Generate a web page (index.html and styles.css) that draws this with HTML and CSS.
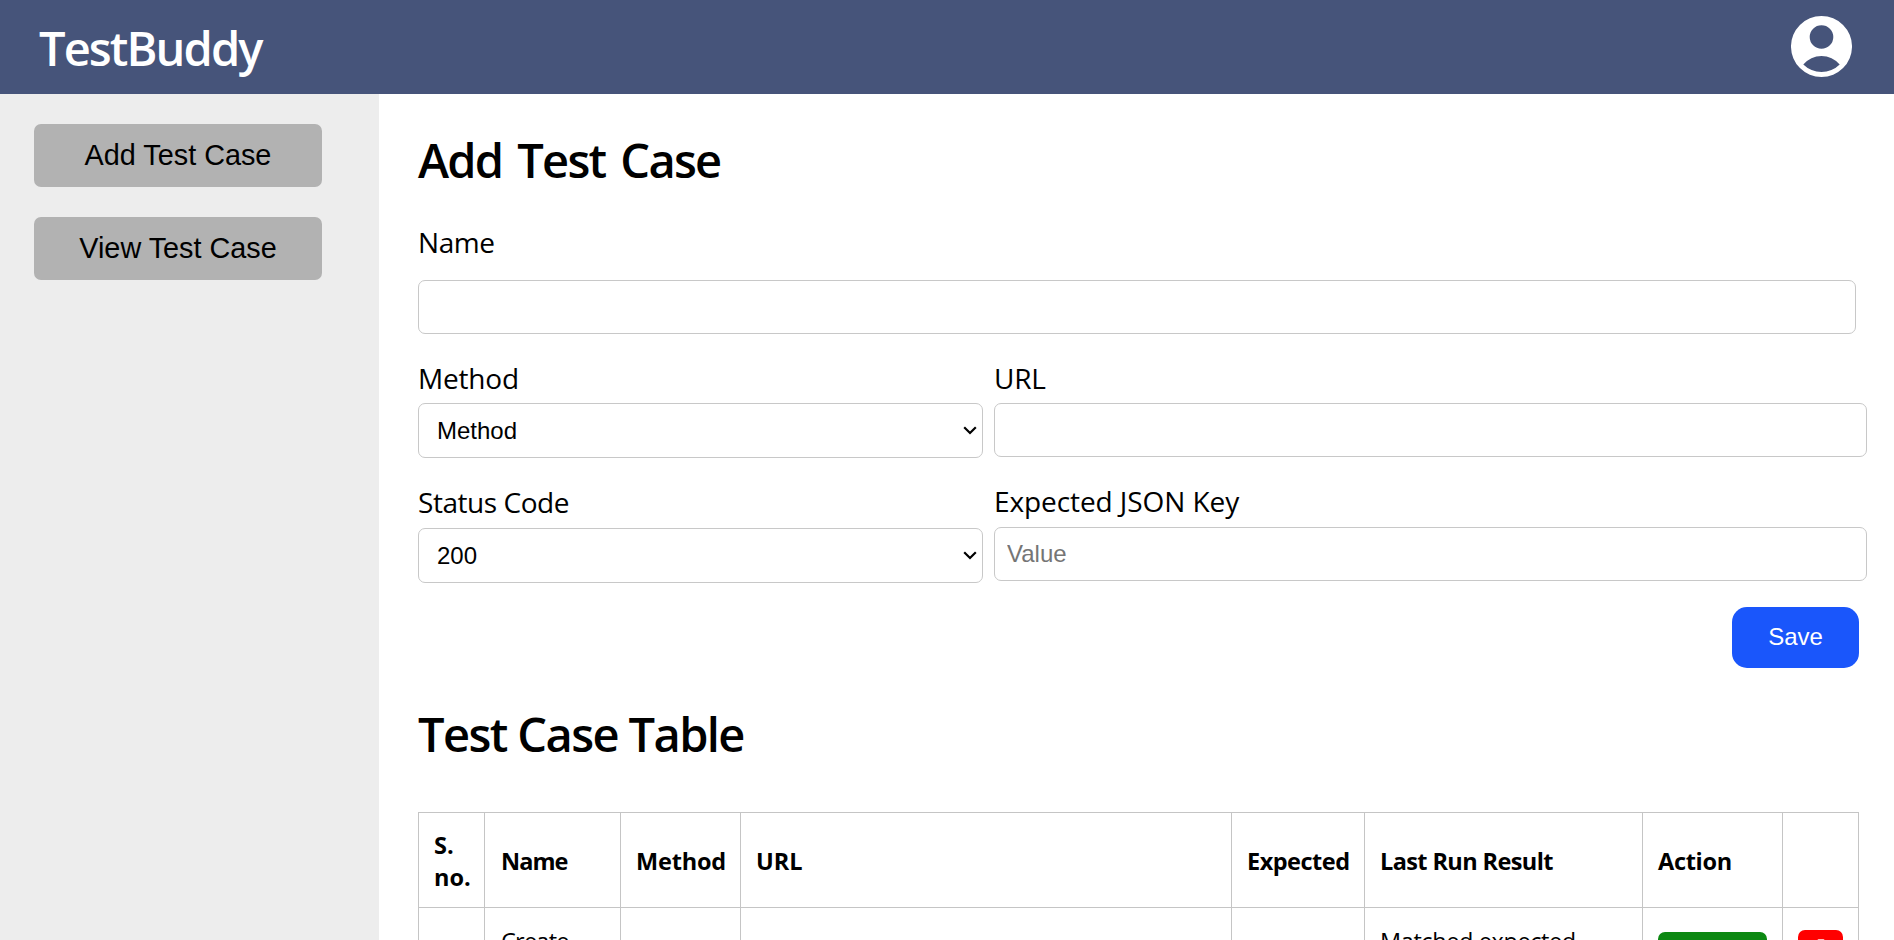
FILE: index.html
```html
<!DOCTYPE html>
<html lang="en">
<head>
<meta charset="utf-8">
<title>TestBuddy</title>
<link rel="stylesheet" href="styles.css">
</head>
<body>
<header class="topbar">
  <div class="brand">TestBuddy</div>
  <svg class="avatar" viewBox="0 0 61 61" aria-label="Account">
    <path fill="#fff" fill-rule="evenodd" d="M30.5 0a30.5 30.5 0 1 1 0 61a30.5 30.5 0 1 1 0-61zM30.5 9.2a11.8 11.8 0 1 0 0 23.6a11.8 11.8 0 1 0 0-23.6zM12.3 48.5A25.8 25.8 0 0 0 48.7 48.5A23.7 23.7 0 0 0 12.3 48.5z"/>
  </svg>
</header>
<div class="layout">
  <nav class="sidebar">
    <button class="nav-btn">Add Test Case</button>
    <button class="nav-btn">View Test Case</button>
  </nav>
  <main class="content">
    <h1 class="title title-add">Add Test Case</h1>
    <form class="form">
      <div class="field field-name">
        <label class="label label-tight">Name</label>
        <input class="input" type="text">
      </div>
      <div class="columns">
        <div class="field">
          <label class="label label-method">Method</label>
          <div class="select-wrap">
            <select class="input select"><option>Method</option></select>
            <svg class="chevron" viewBox="0 0 14 9"><path d="M1.2 1.2L7 7L12.8 1.2"/></svg>
          </div>
          <label class="label label-tight label-next">Status Code</label>
          <div class="select-wrap select-wrap-status">
            <select class="input select"><option>200</option></select>
            <svg class="chevron" viewBox="0 0 14 9"><path d="M1.2 1.2L7 7L12.8 1.2"/></svg>
          </div>
        </div>
        <div class="field">
          <label class="label label-url">URL</label>
          <input class="input input-url" type="text">
          <label class="label label-json label-next">Expected JSON Key</label>
          <input class="input input-json" type="text" placeholder="Value">
        </div>
      </div>
      <div class="actions"><button class="save" type="button">Save</button></div>
    </form>
    <h1 class="title title-table">Test Case Table</h1>
    <table class="cases">
      <colgroup><col class="c-no"><col class="c-name"><col class="c-method"><col class="c-url"><col class="c-expected"><col class="c-result"><col class="c-action"><col class="c-delete"></colgroup>
      <thead>
        <tr><th>S.<br>no.</th><th class="t-name">Name</th><th class="t-method">Method</th><th>URL</th><th class="t-expected">Expected</th><th class="t-result">Last Run Result</th><th class="t-action">Action</th><th></th></tr>
      </thead>
      <tbody>
        <tr><td></td><td class="t-create">Create</td><td></td><td></td><td></td><td class="t-matched">Matched expected</td>
          <td class="cell-run"><button class="run" aria-label="Run"></button></td>
          <td class="cell-delete"><button class="delete" aria-label="Delete"><svg class="trash" viewBox="0 0 448 512"><path fill="#fff" d="M135 18L128 32H32a32 32 0 0 0 0 64h384a32 32 0 0 0 0-64h-96l-7-14A32 32 0 0 0 284 0H164a32 32 0 0 0-29 18zM416 128H32l21 339a48 48 0 0 0 48 45h246a48 48 0 0 0 48-45z"/></svg></button></td></tr>
      </tbody>
    </table>
  </main>
</div>
</body>
</html>
```
FILE: styles.css
```css
* { box-sizing: border-box; }
body {
  margin: 0;
  height: 940px;
  overflow: hidden;
  display: flex;
  flex-direction: column;
  background: #fff;
  color: #000;
  font-family: "Open Sans", "Noto Sans", sans-serif;
}
.topbar {
  flex: none;
  height: 94px;
  padding: 0 42px 0 39px;
  display: flex;
  align-items: center;
  justify-content: space-between;
  background: #46547a;
}
.brand {
  color: #fff;
  font-size: 47px;
  font-weight: 600;
  line-height: 64px;
  letter-spacing: -1.9px;
  padding-top: 2px;
}
.avatar { width: 61px; height: 61px; margin-bottom: 1px; }
.layout { flex: 1; min-height: 0; display: flex; }
.sidebar {
  flex: none;
  width: 379px;
  padding: 30px 57px 0 34px;
  display: flex;
  flex-direction: column;
  gap: 30px;
  background: #ededed;
}
.nav-btn {
  height: 63px;
  border: 0;
  border-radius: 7px;
  background: #b2b2b2;
  color: #000;
  font: 28.8px "Liberation Sans", Arial, sans-serif;
}
.content { flex: 1; min-width: 0; padding: 34px 27px 0 39px; overflow: hidden; }
.title {
  margin: 0;
  font-size: 47px;
  font-weight: 600;
  line-height: 64px;
}
.title-add { letter-spacing: -1.75px; word-spacing: 4.5px; }
.title-table { letter-spacing: -1.6px; margin-top: 34px; }
.form { margin-top: 31px; }
.field { display: flex; flex-direction: column; }
.field-name { width: 1438px; gap: 19px; }
.columns {
  display: grid;
  grid-template-columns: 565px 873px;
  column-gap: 11px;
  align-items: start;
  margin-top: 25px;
}
.label { font-size: 28px; line-height: 38px; }
.label-tight { letter-spacing: -0.45px; }
.label-method, .label-url { letter-spacing: -0.2px; }
.label-json { letter-spacing: -0.08px; }
.label-next { margin-top: 25px; }
.input {
  display: block;
  width: 100%;
  height: 54px;
  padding: 0 12px;
  border: 1px solid #c8c8c8;
  border-radius: 7px;
  background: #fff;
  color: #000;
  font: 24px "Liberation Sans", Arial, sans-serif;
}
.input::placeholder { color: #757575; }
.input-url { margin-top: 6px; }
.input-json { margin-top: 7px; }
.select-wrap { position: relative; margin-top: 6px; }
.select-wrap-status { margin-top: 7px; }
.select { height: 55px; padding: 0 0 0 18px; appearance: none; }
.chevron {
  position: absolute;
  right: 6px;
  top: 23px;
  width: 14px;
  height: 9px;
  fill: none;
  stroke: #000;
  stroke-width: 2.2;
  pointer-events: none;
}
.actions { display: flex; justify-content: flex-end; width: 1441px; margin-top: 24px; }
.save {
  width: 127px;
  height: 61px;
  padding: 0 0 2px;
  border: 0;
  border-radius: 15px;
  background: #1a56fb;
  color: #fff;
  font: 24px "Liberation Sans", Arial, sans-serif;
}
.cases {
  width: 1441px;
  margin-top: 46px;
  table-layout: fixed;
  border-collapse: collapse;
  font-size: 23.5px;
  line-height: 32px;
}
.cases th, .cases td {
  padding: 16px 0 14px 15px;
  border: 1px solid #c5c5c5;
  text-align: left;
  white-space: nowrap;
}
.cases th { height: 94px; font-weight: 700; }
.cases td { height: 120px; padding-top: 17px; vertical-align: top; }
.c-no { width: 66px; }
.c-name { width: 136px; }
.c-method { width: 120px; }
.c-url { width: 491px; }
.c-expected { width: 133px; }
.c-result { width: 278px; }
.c-action { width: 140px; }
.c-delete { width: 76px; }
.cases .t-name { letter-spacing: -0.95px; }
.t-method { letter-spacing: -0.2px; }
.t-expected { letter-spacing: -0.5px; }
.t-result { letter-spacing: -0.6px; }
.t-action { letter-spacing: -0.3px; }
.cases .t-name, .cases .t-create { padding-left: 16px; }
.t-create { letter-spacing: -0.75px; }
.t-matched { letter-spacing: -0.4px; }
.cases .cell-run { padding-top: 24px; }
.cases .cell-delete { padding-top: 22px; }
.run, .delete { display: flex; justify-content: center; align-items: flex-start; border: 0; border-radius: 7px; padding: 0; }
.run { width: 109px; height: 50px; background: #0c8812; }
.delete { width: 45px; height: 50px; padding-top: 9px; background: #f00; }
.trash { width: 18px; height: 21px; }
```
